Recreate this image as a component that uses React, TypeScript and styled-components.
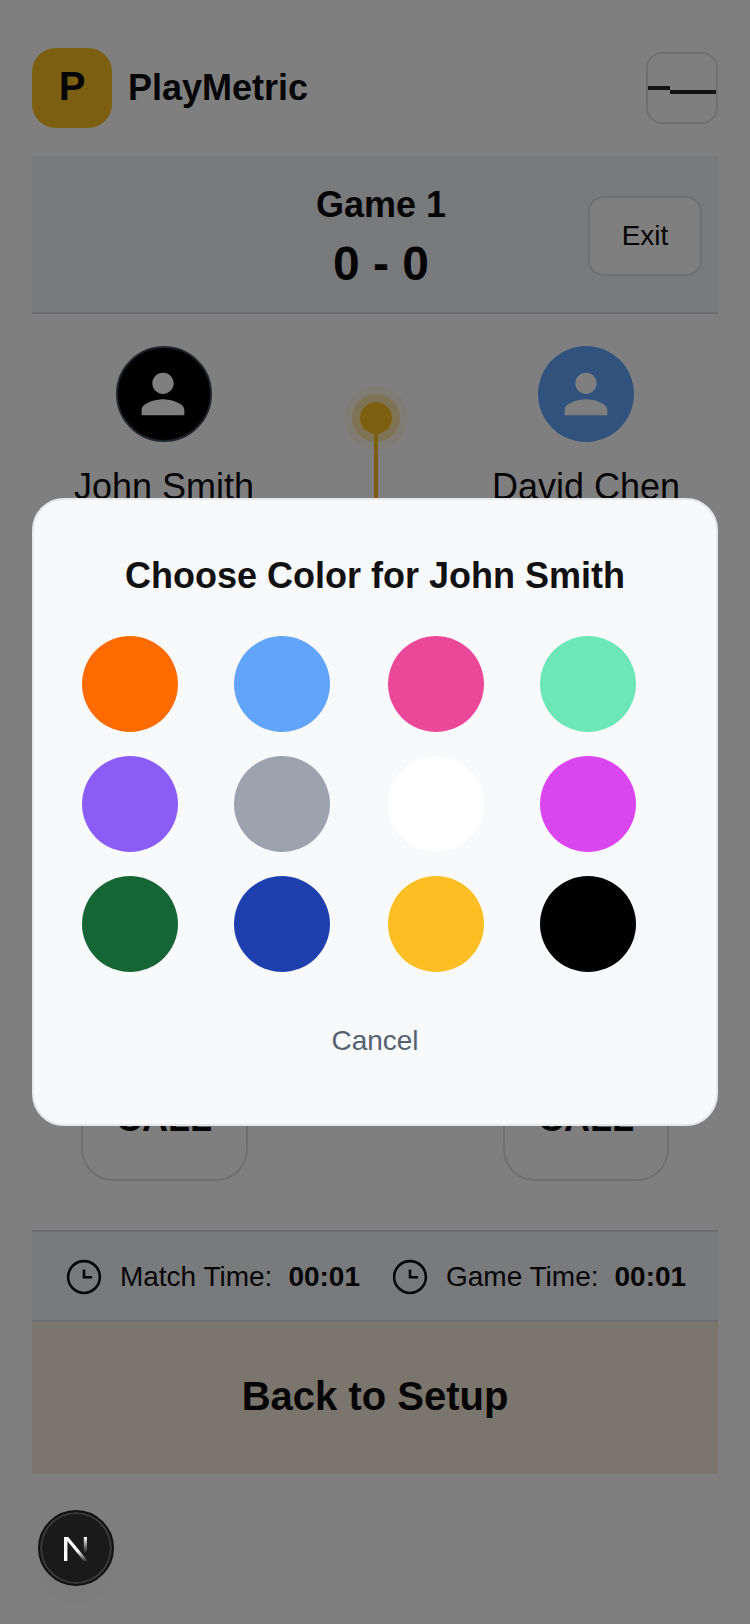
import styled, { createGlobalStyle } from 'styled-components';

const GlobalStyle = createGlobalStyle`
  * {
    box-sizing: border-box;
  }

  body {
    margin: 0;
    background: #ffffff;
    color: #0b0b0c;
    font-family: 'Liberation Sans', Arial, sans-serif;
  }
`;

const Page = styled.div`
  height: 1624px;
  padding: 48px 32px 0;
  overflow: hidden;
  display: flex;
  flex-direction: column;
`;

const Header = styled.header`
  display: flex;
  justify-content: space-between;
  align-items: center;
  height: 80px;
`;

const Brand = styled.div`
  display: flex;
  align-items: center;
  gap: 16px;
`;

const LogoMark = styled.div`
  width: 80px;
  height: 80px;
  padding-bottom: 4px;
  border-radius: 24px;
  background: #fbbf24;
  display: flex;
  align-items: center;
  justify-content: center;
  font-size: 40px;
  font-weight: 700;
`;

const BrandName = styled.div`
  font-size: 36px;
  font-weight: 700;
`;

const MenuButton = styled.button`
  width: 72px;
  height: 72px;
  padding: 0;
  background: transparent;
  border: 2px solid #dee1e5;
  border-radius: 16px;
  display: flex;
  align-items: center;
`;

const MenuBar = styled.span<{ $width: number; $drop: number }>`
  display: block;
  width: ${({ $width }) => $width}px;
  height: 4px;
  margin-top: ${({ $drop }) => $drop}px;
  background: #262626;
`;

const ScorePanel = styled.section`
  margin-top: 28px;
  padding: 22px 16px 18px 142px;
  display: flex;
  background: #f3f4f7;
  border-bottom: 2px solid #d8dbe0;
`;

const ScoreText = styled.div`
  flex: 1;
  text-align: center;
  font-weight: 700;

  .game {
    font-size: 36px;
    line-height: 54px;
  }

  .score {
    margin-top: 2px;
    font-size: 48px;
    line-height: 60px;
  }
`;

const ExitButton = styled.button`
  align-self: center;
  width: 114px;
  height: 80px;
  background: #ffffff;
  border: 2px solid #dee1e5;
  border-radius: 16px;
  color: #0b0b0c;
  font-family: inherit;
  font-size: 28px;
`;

const Court = styled.section`
  height: 916px;
  display: grid;
  grid-template-columns: 264px 1fr 264px;
`;

const PlayerColumn = styled.div`
  display: flex;
  flex-direction: column;
  align-items: center;
  padding: 32px 0 49px;
`;

const Avatar = styled.div<{ $color: string; $bordered?: boolean }>`
  width: 96px;
  height: 96px;
  padding-right: ${({ $bordered }) => ($bordered ? '2px' : '0')};
  border-radius: 50%;
  background: ${({ $color }) => $color};
  border: ${({ $bordered }) => ($bordered ? '2px solid #414b5c' : 'none')};
  display: flex;
  align-items: center;
  justify-content: center;

  svg {
    width: 64px;
    height: 64px;
    flex: none;
    fill: #ffffff;
  }
`;

const PlayerName = styled.div`
  margin-top: 18px;
  font-size: 36px;
  line-height: 54px;
`;

const CallButton = styled.button<{ $width: number }>`
  margin-top: auto;
  width: ${({ $width }) => $width}px;
  height: 124px;
  background: transparent;
  border: 2px solid #dee1e5;
  border-radius: 32px;
  color: #0b0b0c;
  font-family: inherit;
  font-size: 36px;
  font-weight: 700;
`;

const Lane = styled.div`
  display: flex;
  flex-direction: column;
  align-items: center;
  padding: 88px 0 120px 2px;
`;

const LaneDot = styled.div`
  width: 32px;
  height: 32px;
  flex: none;
  border-radius: 50%;
  background: #fbbf24;
  box-shadow:
    0 0 0 8px rgba(251, 191, 36, 0.3),
    0 0 0 16px rgba(251, 191, 36, 0.1);
`;

const LaneLine = styled.div`
  flex: 1;
  width: 4px;
  background: #fbbf24;
`;

const StatusBar = styled.section`
  height: 92px;
  padding: 2px 0 0 2px;
  display: flex;
  justify-content: center;
  align-items: center;
  gap: 32px;
  background: #f3f4f7;
  border-top: 2px solid #d8dbe0;
  border-bottom: 2px solid #d8dbe0;
`;

const Timer = styled.div`
  display: flex;
  align-items: center;
  font-size: 28px;

  svg {
    width: 36px;
    height: 36px;
    margin-right: 18px;
    fill: none;
    stroke: #0b0b0c;
    stroke-width: 1.7;
  }

  b {
    margin-left: 16px;
  }
`;

const BackButton = styled.button`
  height: 152px;
  padding-bottom: 4px;
  border: none;
  background: #f4ecdc;
  color: #0b0b0c;
  font-family: inherit;
  font-size: 40px;
  font-weight: 700;
`;

const Overlay = styled.div`
  position: fixed;
  inset: 0;
  padding: 0 32px;
  display: flex;
  align-items: center;
  background: rgba(0, 0, 0, 0.5);
`;

const Modal = styled.div`
  width: 100%;
  padding: 48px;
  background: #f8f9fb;
  border: 2px solid #e5e7eb;
  border-radius: 32px;
  display: flex;
  flex-direction: column;
`;

const ModalTitle = styled.h2`
  margin: 1px 0 33px;
  font-size: 36px;
  line-height: 54px;
  font-weight: 700;
  text-align: center;
  color: #111111;
`;

const Swatches = styled.div`
  display: grid;
  grid-template-columns: 128px 130px 128px 1fr;
  gap: 24px;
  margin-bottom: 32px;
`;

const Swatch = styled.button<{ $color: string }>`
  width: 96px;
  height: 96px;
  padding: 0;
  border: none;
  border-radius: 50%;
  background: ${({ $color }) => $color};
`;

const CancelButton = styled.button`
  height: 72px;
  padding: 2px 0 0;
  background: transparent;
  border: none;
  color: #566170;
  font-family: inherit;
  font-size: 28px;
`;

const DevBadge = styled.div`
  position: fixed;
  left: 38px;
  bottom: 38px;
  width: 76px;
  height: 76px;
  padding-top: 2px;
  border-radius: 50%;
  background: #1a1a1a;
  border: 2px solid #111111;
  box-shadow:
    inset 0 0 0 2px #3a3a3a,
    0 16px 32px rgba(0, 0, 0, 0.03);
  display: flex;
  align-items: center;
  justify-content: center;
`;

const swatchColors = [
  '#ff6b00',
  '#60a5fa',
  '#ec4899',
  '#6ee7b7',
  '#8b5cf6',
  '#9ca3af',
  '#ffffff',
  '#d946ef',
  '#166534',
  '#1e40af',
  '#fbbf24',
  '#000000',
];

function PersonIcon() {
  return (
    <svg viewBox="0 0 24 24">
      <path d="M12 12c2.21 0 4-1.79 4-4s-1.79-4-4-4-4 1.79-4 4 1.79 4 4 4zm0 2c-2.67 0-8 1.34-8 4v2h16v-2c0-2.66-5.33-4-8-4z" />
    </svg>
  );
}

function ClockIcon() {
  return (
    <svg viewBox="0 0 24 24">
      <circle cx="12" cy="12" r="10.6" />
      <path d="M12 7V12.2h5.4" />
    </svg>
  );
}

function NextMark() {
  return (
    <svg width="26" height="26" viewBox="0 0 26 26">
      <defs>
        <linearGradient id="nDiagonal" x1="4" y1="0" x2="24" y2="26" gradientUnits="userSpaceOnUse">
          <stop offset="0.55" stopColor="#ffffff" />
          <stop offset="1" stopColor="#ffffff" stopOpacity="0" />
        </linearGradient>
        <linearGradient id="nRight" x1="0" y1="1" x2="0" y2="17" gradientUnits="userSpaceOnUse">
          <stop offset="0" stopColor="#ffffff" />
          <stop offset="1" stopColor="#ffffff" stopOpacity="0" />
        </linearGradient>
      </defs>
      <path d="M1 1h3.4v24H1z" fill="#ffffff" />
      <path d="M1 1h4.2L25 25h-4.2z" fill="url(#nDiagonal)" />
      <path d="M20.8 1H24v17h-3.2z" fill="url(#nRight)" />
    </svg>
  );
}

export default function App() {
  return (
    <>
      <GlobalStyle />
      <Page>
        <Header>
          <Brand>
            <LogoMark>P</LogoMark>
            <BrandName>PlayMetric</BrandName>
          </Brand>
          <MenuButton>
            <MenuBar $width={22} $drop={0} />
            <MenuBar $width={46} $drop={8} />
          </MenuButton>
        </Header>

        <ScorePanel>
          <ScoreText>
            <div className="game">Game 1</div>
            <div className="score">0 - 0</div>
          </ScoreText>
          <ExitButton>Exit</ExitButton>
        </ScorePanel>

        <Court>
          <PlayerColumn>
            <Avatar $color="#000000" $bordered>
              <PersonIcon />
            </Avatar>
            <PlayerName>John Smith</PlayerName>
            <CallButton $width={167}>CALL</CallButton>
          </PlayerColumn>
          <Lane>
            <LaneDot />
            <LaneLine />
          </Lane>
          <PlayerColumn>
            <Avatar $color="#60a5fa">
              <PersonIcon />
            </Avatar>
            <PlayerName>David Chen</PlayerName>
            <CallButton $width={166}>CALL</CallButton>
          </PlayerColumn>
        </Court>

        <StatusBar>
          <Timer>
            <ClockIcon />
            Match Time:<b>00:01</b>
          </Timer>
          <Timer>
            <ClockIcon />
            Game Time:<b>00:01</b>
          </Timer>
        </StatusBar>

        <BackButton>Back to Setup</BackButton>
      </Page>

      <Overlay>
        <Modal>
          <ModalTitle>Choose Color for John Smith</ModalTitle>
          <Swatches>
            {swatchColors.map((color) => (
              <Swatch key={color} $color={color} />
            ))}
          </Swatches>
          <CancelButton>Cancel</CancelButton>
        </Modal>
      </Overlay>

      <DevBadge>
        <NextMark />
      </DevBadge>
    </>
  );
}
